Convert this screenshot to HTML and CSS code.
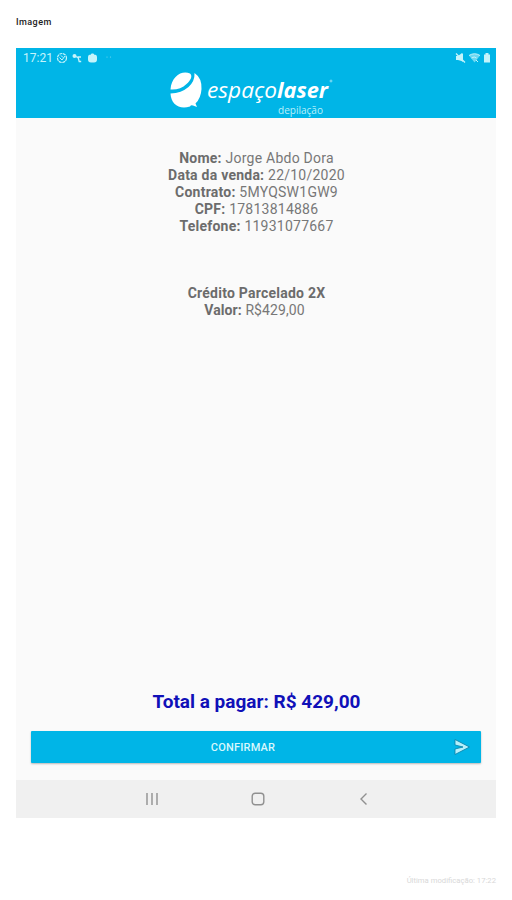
FILE: index.html
```html
<!DOCTYPE html>
<html lang="pt-BR">
<head>
<meta charset="utf-8">
<title>Imagem</title>
<link rel="stylesheet" href="styles.css">
</head>
<body>
<h1 class="title">Imagem</h1>
<main class="screen">
  <header class="header">
    <div class="status">
      <span class="clock">17:21</span>
      <svg class="status-left" width="62" height="12" viewBox="0 0 62 12">
        <circle cx="6" cy="6" r="4.5" fill="none" stroke="currentColor" stroke-width="1.2" stroke-dasharray="3 .6"/>
        <path d="M3.5 5.5 6 8l3-4M5 3.5l2 2" fill="none" stroke="currentColor"/>
        <circle cx="18.500" cy="4" r="2" fill="currentColor"/>
        <path d="m20 4.500 2 1.200M21.500 5h3.500M22 5l1.200 4.500h2" fill="none" stroke="currentColor" stroke-width="1.300"/>
        <path d="M33.500 2.700h1.200C35 1 38 1 38.300 2.700h1.200Q41 3 41 5v2.500Q41 10.500 38 10.500h-3Q32 10.500 32 7.500V5Q32 3 33.500 2.700z" fill="currentColor"/>
        <circle cx="51" cy="5" r=".6" fill="currentColor" opacity=".6"/>
        <circle cx="54.500" cy="5" r=".6" fill="currentColor" opacity=".6"/>
      </svg>
      <svg class="status-right" width="38" height="12" viewBox="0 0 38 12">
        <path d="M3 4h2l4-3 1 1v8L8.500 9 5 8H3z" fill="currentColor"/>
        <path d="m3 1.500 9 9" stroke="currentColor" stroke-width="1.300"/>
        <path d="M16 3.500Q21.500 0 27 3.500L21.500 10.500z" fill="currentColor" opacity=".55"/>
        <path d="M16 3.500Q21.500 0 27 3.500M18.500 6q3-2 5 0M23 8l2 2" fill="none" stroke="currentColor"/>
        <path d="M31 2.500h1.500V1h3v1.500H37v8h-6z" fill="currentColor"/>
      </svg>
    </div>
    <svg class="logo" width="190" height="50" viewBox="0 0 190 50" role="img" aria-label="espaçolaser depilação">
      <path d="M35 5.500C27 2 16.500 8 15.500 21.500c6 .5 12-1.500 16-5.500 4-3.500 6.500-8 3.500-10.500z" fill="#fff"/>
      <path d="M39.500 5q7.500 5 7 16-.5 9-6 14.500l1.500 3.500-4-1.500q-2-1-3 1C24 42 16 36 15.500 25.500q11-.5 18-6.500 6.500-6 6-14z" fill="#fff"/>
      <text class="brand" x="52" y="30" textLength="70" lengthAdjust="spacingAndGlyphs">espaço</text>
      <text class="brand brand-bold" x="122" y="30" textLength="51" lengthAdjust="spacingAndGlyphs">laser</text>
      <circle cx="176" cy="13" r="1" fill="none" stroke="#fff" stroke-width=".6" opacity=".8"/>
      <text class="tagline" x="123" y="45.500" textLength="45" lengthAdjust="spacingAndGlyphs">depilação</text>
    </svg>
  </header>
  <section class="details">
    <p><b>Nome:</b> Jorge Abdo Dora</p>
    <p><b>Data da venda:</b> 22/10/2020</p>
    <p><b>Contrato:</b> 5MYQSW1GW9</p>
    <p><b>CPF:</b> 17813814886</p>
    <p><b>Telefone:</b> 11931077667</p>
  </section>
  <section class="payment">
    <p><b>Crédito Parcelado 2X</b></p>
    <p class="amount"><b>Valor:</b> R$429,00</p>
  </section>
  <p class="total">Total a pagar: R$ 429,00</p>
  <button class="confirm" type="button">
    <span>CONFIRMAR</span>
    <svg class="send" width="18" height="18" viewBox="0 0 18 18">
      <path d="M2 1.500 16.500 9 2 16.500V11l8-2-8-2z" fill="#b5f0fb" stroke="#087fa6" stroke-width=".8" stroke-linejoin="round"/>
    </svg>
  </button>
  <nav class="nav">
    <svg width="14" height="14" viewBox="0 0 14 14"><path d="M2 1v12M7 1v12M12 1v12"/></svg>
    <svg width="14" height="14" viewBox="0 0 14 14"><rect x="1.200" y="1.200" width="11.600" height="11.600" rx="3"/></svg>
    <svg width="14" height="14" viewBox="0 0 14 14"><path d="M9.500 1.500 4 7l5.500 5.500"/></svg>
  </nav>
</main>
<footer class="footer">Última modificação: 17:22</footer>
</body>
</html>
```

FILE: styles.css
```css
* { box-sizing: border-box; }
body {
  margin: 0;
  padding: 15px 16px 0;
  height: 900px;
  background: #fff;
  font-family: Roboto, "Liberation Sans", sans-serif;
  overflow: hidden;
}
p { margin: 0; }
.title {
  margin: 0;
  height: 33px;
  font-size: 9px;
  line-height: 14px;
  font-weight: 500;
  letter-spacing: .45px;
  color: #222;
}
.screen {
  display: flex;
  flex-direction: column;
  width: 480px;
  height: 770px;
  background: #fafafa;
}
.header {
  flex: none;
  height: 70px;
  background: #00b5e7;
  color: #c5f4fb;
}
.status {
  display: flex;
  align-items: center;
  height: 20px;
  padding: 0 5px 0 7px;
}
.clock {
  width: 33px;
  font-size: 12px;
  line-height: 20px;
}
.status-right { margin-left: auto; }
.logo {
  display: block;
  margin: 0 0 0 139px;
}
.brand {
  font: italic 400 21px "Open Sans", sans-serif;
  fill: #fff;
}
.brand-bold { font-weight: 700; }
.tagline {
  font: 400 10px "Open Sans", sans-serif;
  fill: #b9effa;
}
.details, .payment {
  padding-left: 1px;
  color: #777;
  font-size: 14px;
  line-height: 17px;
  letter-spacing: .24px;
  text-align: center;
  white-space: nowrap;
}
.details b, .payment b { font-weight: 700; color: #6c6c6c; }
.details { padding-top: 32px; }
.payment { padding-top: 50px; }
.amount { padding-right: 4px; letter-spacing: .1px; }
.total {
  margin-top: auto;
  padding-left: 1px;
  color: #1010b8;
  font-size: 19px;
  font-weight: 700;
  line-height: 24px;
  text-align: center;
}
.confirm {
  display: flex;
  align-items: center;
  flex: none;
  height: 32px;
  margin: 17px 15px;
  padding: 0 10px 0 2px;
  border: 0;
  border-radius: 1px;
  background: #00b5e7;
  box-shadow: 0 1px 2px #0004;
  color: #d8f8fd;
  font: 500 11px Roboto, sans-serif;
  letter-spacing: .2px;
}
.confirm span { flex: 1; text-align: center; }
.nav {
  display: grid;
  grid-template-columns: repeat(3, 106px);
  place-content: center;
  justify-items: center;
  flex: none;
  height: 38px;
  padding-left: 4px;
  background: #f0f0f0;
}
.nav svg {
  fill: none;
  stroke: #909090;
  stroke-width: 1.400;
}
.footer {
  padding-top: 56px;
  color: #d8d8d8;
  font-size: 7.700px;
  line-height: 13px;
  text-align: right;
}
```
